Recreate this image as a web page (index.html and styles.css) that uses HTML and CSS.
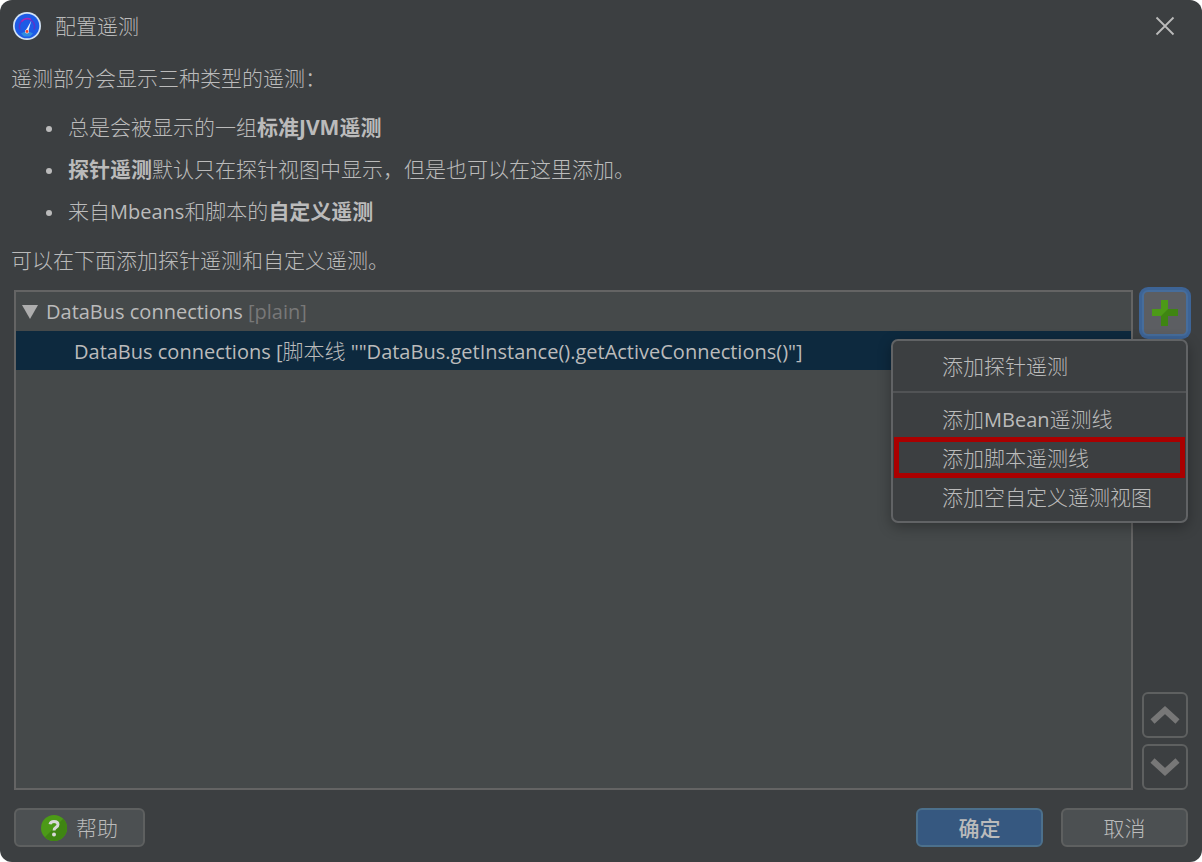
FILE: index.html
```html
<!DOCTYPE html>
<html lang="zh-CN">
<head>
    <meta charset="UTF-8">
    <meta name="viewport" content="width=device-width, initial-scale=1.0">
    <title>配置遥测</title>
    <link rel="stylesheet" href="styles.css">
</head>
<body>
    <div class="dialog">
        <div class="title-bar">
            <svg class="app-icon" viewBox="0 0 28 28" aria-hidden="true">
                <circle cx="14" cy="14" r="14" fill="#d3e3f5"/>
                <circle cx="14" cy="14" r="12.3" fill="#1d5be6"/>
                <path d="M7 17.500a7.600 7.600 0 1 1 14 0" fill="none" stroke="#5a35cc" stroke-width="1.500"/>
                <path d="M8.500 9.500a7.600 7.600 0 0 1 9.500-2" fill="none" stroke="#a828b8" stroke-width="1.500"/>
                <path d="M8 21.500q6-4 12 0l-3 3H11z" fill="#2f8be0"/>
                <path d="M18.300 8.800L15.200 19.500l-2.600-.8z" fill="#e8f0fa"/>
                <circle cx="14" cy="19.500" r="2" fill="#f4ece8"/>
                <circle cx="14" cy="19.500" r="1.400" fill="#f0402c"/>
            </svg>
            <h1>配置遥测</h1>
            <button class="close-button" type="button" aria-label="关闭">
                <svg width="20" height="20" viewBox="0 0 20 20"><path d="M1.5 1.5l17 17M18.5 1.5l-17 17" fill="none" stroke="#bbbbbb" stroke-width="1.8"/></svg>
            </button>
        </div>

        <div class="intro">
            <p>遥测部分会显示三种类型的遥测：</p>
            <ul>
                <li>总是会被显示的一组<b>标准<span class="latin">JVM</span>遥测</b></li>
                <li><b>探针遥测</b>默认只在探针视图中显示，但是也可以在这里添加。</li>
                <li>来自<span class="latin">Mbeans</span>和脚本的<b>自定义遥测</b></li>
            </ul>
            <p>可以在下面添加探针遥测和自定义遥测。</p>
        </div>

        <div class="content">
            <div class="tree" role="tree">
                <div class="tree-row" role="treeitem" aria-expanded="true">
                    <svg class="arrow" width="16" height="14" viewBox="0 0 16 14"><path d="M0 0h16L8 14z" fill="#adadad"/></svg>
                    <span class="latin">DataBus connections <span class="hint">[plain]</span></span>
                </div>
                <div class="tree-row child selected" role="treeitem" aria-selected="true">
                    <span><span class="latin">DataBus connections [</span>脚本线<span class="latin"> ""DataBus.getInstance().getActiveConnections()"]</span></span>
                </div>
            </div>

            <div class="side">
                <div class="add">
                    <button class="icon-button focused" id="addButton" type="button" aria-label="添加">
                        <svg width="26" height="26" viewBox="0 0 26 26">
                            <path d="M9 0h7v9h10v7H16v10H9V16H0V9h9z" fill="#4c9a17"/>
                            <path d="M16 9h10v7H16v10H9V16z" fill="#3f8512"/>
                        </svg>
                    </button>
                    <div class="menu" id="addMenu">
                        <button type="button">添加探针遥测</button>
                        <hr>
                        <button type="button">添加<span class="latin">MBean</span>遥测线</button>
                        <button class="marked" type="button">添加脚本遥测线</button>
                        <button type="button">添加空自定义遥测视图</button>
                    </div>
                </div>
                <div class="move">
                    <button class="icon-button" type="button" aria-label="上移">
                        <svg width="30" height="20" viewBox="0 0 30 20"><path d="M2.5 16.500L15 5l12.500 11.500" fill="none" stroke="#777777" stroke-width="6"/></svg>
                    </button>
                    <button class="icon-button" type="button" aria-label="下移">
                        <svg width="30" height="20" viewBox="0 0 30 20"><path d="M2.500 3.500L15 15l12.500-11.500" fill="none" stroke="#777777" stroke-width="6"/></svg>
                    </button>
                </div>
            </div>
        </div>

        <div class="footer">
            <button class="button help" type="button">
                <svg width="26" height="26" viewBox="0 0 26 26" aria-hidden="true">
                    <circle cx="13" cy="13" r="13" fill="#4c9a17"/>
                    <path d="M22.200 3.800A13 13 0 0 1 3.800 22.200z" fill="#3f8512"/>
                    <path d="M9 9.300q.6-2.800 4-2.800 4 0 4 3 0 1.700-2 2.900-2 1.200-2 3.100" fill="none" stroke="#d8d8d8" stroke-width="3"/>
                    <circle cx="13" cy="19.500" r="2" fill="#d8d8d8"/>
                </svg>
                帮助
            </button>
            <button class="button primary" type="button">确定</button>
            <button class="button" type="button">取消</button>
        </div>
    </div>

    <script>
        const addMenu = document.getElementById("addMenu");

        document.getElementById("addButton").addEventListener("click", () => {
            addMenu.hidden = !addMenu.hidden;
        });
    </script>
</body>
</html>
```
FILE: styles.css
```css
* {
    box-sizing: border-box;
}
body {
    margin: 0;
    background-color: white;
    color: #bbbbbb;
    font-family: "Open Sans", "Noto Sans CJK SC", sans-serif;
    font-size: 21px;
    font-weight: 300;
    line-height: 28px;
}
button {
    padding: 0;
    color: inherit;
    font: inherit;
    cursor: pointer;
}
svg {
    display: block;
    flex: none;
}
.latin {
    font-size: 20px;
    font-weight: 400;
    line-height: 20px;
}
b {
    font-weight: 700;
}
b .latin {
    font-size: 21px;
    font-weight: 700;
}
.dialog {
    display: flex;
    flex-direction: column;
    min-height: 100vh;
    background-color: #3c3f41;
    border-radius: 12px;
}
.title-bar {
    display: flex;
    align-items: center;
    height: 52px;
    padding: 0 27px 0 13px;
}
.title-bar h1 {
    flex: 1;
    margin: 0 0 0 14px;
    font-size: 21px;
    font-weight: 300;
}
.app-icon {
    width: 28px;
    height: 28px;
}
.close-button {
    background: none;
    border: none;
}
.intro {
    padding: 12px 11px 16px;
}
.intro p {
    margin: 0;
}
.intro ul {
    display: flex;
    flex-direction: column;
    gap: 14px;
    margin: 21px 0;
    padding: 0 0 0 35px;
    list-style: none;
}
.intro li::before {
    content: "";
    display: inline-block;
    width: 6px;
    height: 6px;
    margin-right: 16px;
    background-color: #bbbbbb;
    border-radius: 50%;
    vertical-align: middle;
}
.content {
    display: flex;
    flex: 1;
    gap: 9px;
    padding: 0 14px;
}
.tree {
    flex: 1;
    background-color: #45494a;
    border: 2px solid #646464;
}
.tree-row {
    display: flex;
    align-items: center;
    height: 39px;
    padding-left: 6px;
    white-space: nowrap;
}
.tree-row.child {
    padding-left: 58px;
}
.tree-row.selected {
    background-color: #0d293e;
}
.arrow {
    margin-right: 8px;
}
.hint {
    color: #787878;
}
.side {
    display: flex;
    flex-direction: column;
    justify-content: space-between;
}
.add {
    position: relative;
}
.icon-button {
    display: flex;
    align-items: center;
    justify-content: center;
    width: 46px;
    height: 46px;
    background-color: transparent;
    border: 2px solid #5e6060;
    border-radius: 6px;
}
.icon-button.focused {
    background-color: #5c5e62;
    border-color: #466d9c;
    box-shadow: 0 0 0 3px #3d6496;
}
.move {
    display: flex;
    flex-direction: column;
    gap: 6px;
}
.menu {
    position: absolute;
    top: 49px;
    right: 0;
    width: 297px;
    padding: 5px 0;
    background-color: #3c3f41;
    border: 2px solid #616365;
    border-radius: 7px;
    box-shadow: 0 4px 14px rgba(0, 0, 0, 0.3);
}
.menu[hidden] {
    display: none;
}
.menu button {
    display: block;
    width: 100%;
    height: 39px;
    padding-left: 49px;
    background: none;
    border: none;
    text-align: left;
    white-space: nowrap;
}
.menu .marked {
    width: calc(100% - 2px);
    height: 41px;
    margin: -1px 1px;
    padding-left: 48px;
    outline: 5px solid #aa0000;
    outline-offset: -5px;
}
.menu hr {
    margin: 6px 0;
    border: none;
    border-top: 2px solid #515355;
}
.footer {
    display: flex;
    gap: 18px;
    padding: 18px 14px 15px;
}
.button {
    display: flex;
    align-items: center;
    justify-content: center;
    gap: 9px;
    width: 127px;
    height: 39px;
    background-color: #4c5052;
    border: 2px solid #5e6060;
    border-radius: 6px;
}
.button.help {
    width: 131px;
    margin-right: auto;
}
.button.primary {
    background-color: #365880;
    border-color: #4c708c;
    font-weight: 500;
}
```
